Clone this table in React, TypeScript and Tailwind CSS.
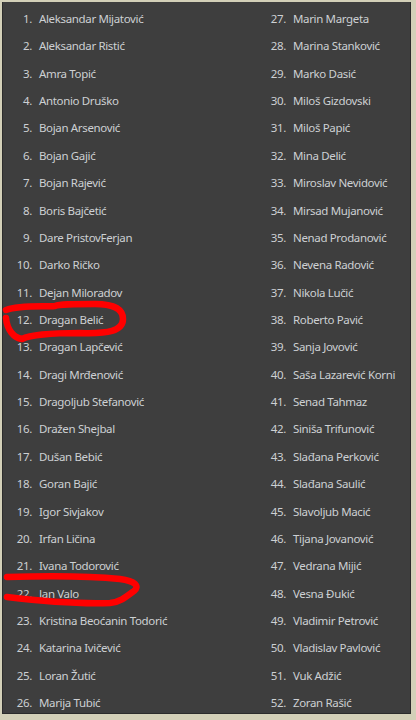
import React from 'react';

const leftNames = [
  'Aleksandar Mijatović',
  'Aleksandar Ristić',
  'Amra Topić',
  'Antonio Druško',
  'Bojan Arsenović',
  'Bojan Gajić',
  'Bojan Rajević',
  'Boris Bajčetić',
  'Dare PristovFerjan',
  'Darko Ričko',
  'Dejan Miloradov',
  'Dragan Belić',
  'Dragan Lapčević',
  'Dragi Mrđenović',
  'Dragoljub Stefanović',
  'Dražen Shejbal',
  'Dušan Bebić',
  'Goran Bajić',
  'Igor Sivjakov',
  'Irfan Ličina',
  'Ivana Todorović',
  'Jan Valo',
  'Kristina Beoćanin Todorić',
  'Katarina Ivičević',
  'Loran Žutić',
  'Marija Tubić',
];

const rightNames = [
  'Marin Margeta',
  'Marina Stanković',
  'Marko Dasić',
  'Miloš Gizdovski',
  'Miloš Papić',
  'Mina Delić',
  'Miroslav Nevidović',
  'Mirsad Mujanović',
  'Nenad Prodanović',
  'Nevena Radović',
  'Nikola Lučić',
  'Roberto Pavić',
  'Sanja Jovović',
  'Saša Lazarević Korni',
  'Senad Tahmaz',
  'Siniša Trifunović',
  'Slađana Perković',
  'Slađana Saulić',
  'Slavoljub Macić',
  'Tijana Jovanović',
  'Vedrana Mijić',
  'Vesna Đukić',
  'Vladimir Petrović',
  'Vladislav Pavlović',
  'Vuk Adžić',
  'Zoran Rašić',
];

interface ColumnProps {
  names: string[];
  start: number;
  numberWidth: string;
  className?: string;
}

const Column: React.FC<ColumnProps> = ({ names, start, numberWidth, className }) => (
  <ol className={className}>
    {names.map((name, i) => (
      <li key={name} className="flex items-center h-[27.36px]">
        <span className={`${numberWidth} text-right`}>{start + i}.</span>
        <span className="ml-[7px] whitespace-nowrap">{name}</span>
      </li>
    ))}
  </ol>
);

export default function App() {
  return (
    <div className="w-[416px] h-[720px] bg-[#d3d0b8] pl-[2px] pt-[2px] pr-[5px] pb-[6px]">
      <div className="relative w-full h-full border-l border-b border-r border-[#2b2b2b] bg-[#3e3e3e] pt-[3px] text-[11.5px] tracking-[-0.35px] text-[#cdd0d3] font-['Noto_Sans',sans-serif] flex">
        <Column names={leftNames} start={1} numberWidth="w-[29px]" className="w-[250px]" />
        <Column names={rightNames} start={27} numberWidth="w-[33px]" className="flex-1" />

        <svg className="absolute left-[-3px] top-[-2px] pointer-events-none" width="416" height="720">
          <path
            d="M6 310 C 20 305, 45 307, 55 306 C 60 304, 70 304, 95 304 C 112 304, 123 308, 123 319 C 123 331, 108 334, 80 333 C 55 333, 32 334, 22 339 C 14 338, 7 330, 6 318"
            fill="none"
            stroke="#ff0000"
            strokeWidth="6.5"
            strokeLinecap="round"
            strokeLinejoin="round"
          />
          <path
            d="M7 577 C 40 576, 90 576, 120 579 C 135 581, 140 586, 134 591 C 126 597, 120 602, 110 603 C 80 604, 40 601, 7 597"
            fill="none"
            stroke="#ff0000"
            strokeWidth="6.5"
            strokeLinecap="round"
            strokeLinejoin="round"
          />
        </svg>
      </div>
    </div>
  );
}
